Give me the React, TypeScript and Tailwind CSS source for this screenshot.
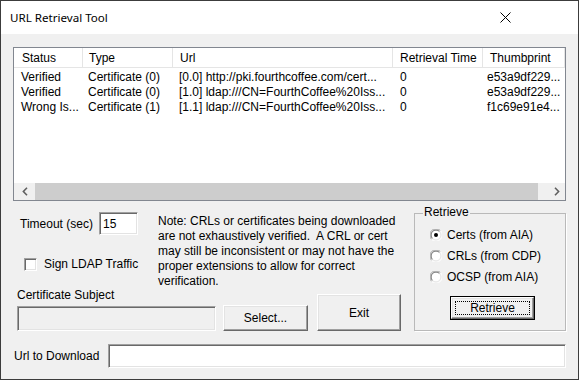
import React from "react";

const rows = [
  ["Verified", "Certificate (0)", "[0.0] http://pki.fourthcoffee.com/cert...", "0", "e53a9df229..."],
  ["Verified", "Certificate (0)", "[1.0] ldap:///CN=FourthCoffee%20Iss...", "0", "e53a9df229..."],
  ["Wrong Is...", "Certificate (1)", "[1.1] ldap:///CN=FourthCoffee%20Iss...", "0", "f1c69e91e4..."],
];

function Radio({ checked }: { checked?: boolean }) {
  return (
    <svg width="12" height="12" viewBox="0 0 12 12" className="shrink-0">
      <circle cx="6" cy="6" r="5.5" fill="#ffffff" />
      <path d="M1.6 10.4 A5.5 5.5 0 0 1 10.4 1.6" fill="none" stroke="#a0a0a0" strokeWidth="1" />
      <path d="M10.4 1.6 A5.5 5.5 0 0 1 1.6 10.4" fill="none" stroke="#ffffff" strokeWidth="1" />
      <path d="M2.5 9.5 A4.5 4.5 0 0 1 9.5 2.5" fill="none" stroke="#696969" strokeWidth="1" />
      <path d="M9.5 2.5 A4.5 4.5 0 0 1 2.5 9.5" fill="none" stroke="#e3e3e3" strokeWidth="1" />
      {checked && <circle cx="6" cy="6" r="2" fill="#000000" />}
    </svg>
  );
}

const btn =
  "flex items-center justify-center bg-[#f0f0f0] border border-t-white border-l-white border-b-[#696969] border-r-[#696969] shadow-[inset_-1px_-1px_0_#a0a0a0,inset_1px_1px_0_#e3e3e3]";
const sunken =
  "border border-t-[#a0a0a0] border-l-[#a0a0a0] border-b-white border-r-white shadow-[inset_1px_1px_0_#696969,inset_-1px_-1px_0_#e3e3e3]";

export default function App() {
  return (
    <div className="w-[579px] h-[380px] border border-[#3c3c3c] bg-[#f0f0f0] flex flex-col overflow-hidden font-['Liberation_Sans',Arial,sans-serif] text-[12px] text-black">
      {/* Title bar */}
      <div className="h-[33px] bg-white flex items-center shrink-0">
        <span className="pl-[9px] text-[11.6px] font-['Noto_Sans',sans-serif]">URL Retrieval Tool</span>
        <svg width="11" height="11" viewBox="0 0 11 11" className="ml-auto mr-[67px]">
          <path d="M0.5 0.5 L10.5 10.5 M10.5 0.5 L0.5 10.5" stroke="#000" strokeWidth="1" />
        </svg>
      </div>

      {/* List view */}
      <div className="mx-[12px] mt-[13px] h-[154px] border border-[#828790] bg-white flex flex-col shrink-0">
        <div className="h-[20px] flex items-center border-b border-[#e5e5e5]">
          <div className="w-[69px] h-full flex items-center pl-[8px] border-r border-[#e5e5e5]">Status</div>
          <div className="w-[90px] h-full flex items-center pl-[6px] border-r border-[#e5e5e5]">Type</div>
          <div className="w-[220px] h-full flex items-center pl-[7px] border-r border-[#e5e5e5]">Url</div>
          <div className="w-[90px] h-full flex items-center pl-[7px] border-r border-[#e5e5e5] whitespace-nowrap">Retrieval Time</div>
          <div className="w-[82px] h-full flex items-center pl-[7px] border-r border-[#e5e5e5]">Thumbprint</div>
        </div>
        <div className="pt-[2px] flex flex-col">
          {rows.map((r, i) => (
            <div key={i} className="h-[15px] flex items-center leading-[15px] whitespace-nowrap">
              <div className="w-[69px] pl-[7px]">{r[0]}</div>
              <div className="w-[90px] pl-[5px]">{r[1]}</div>
              <div className="w-[220px] pl-[6px] overflow-hidden">{r[2]}</div>
              <div className="w-[90px] pl-[7px]">{r[3]}</div>
              <div className="w-[82px] pl-[4px]">{r[4]}</div>
            </div>
          ))}
        </div>
        <div className="mt-auto h-[17px] flex bg-[#f0f0f0]">
          <div className="w-[21px] flex items-center justify-center">
            <svg width="6" height="9" viewBox="0 0 6 9">
              <path d="M5 0.8 L1.4 4.5 L5 8.2" fill="none" stroke="#606060" strokeWidth="1.6" />
            </svg>
          </div>
          <div className="w-[503px] bg-[#cdcdcd]" />
          <div className="flex-1" />
          <div className="w-[17px] flex items-center justify-center">
            <svg width="6" height="9" viewBox="0 0 6 9">
              <path d="M1 0.8 L4.6 4.5 L1 8.2" fill="none" stroke="#606060" strokeWidth="1.6" />
            </svg>
          </div>
        </div>
      </div>

      {/* Lower section */}
      <div className="mx-[12px] flex shrink-0">
        <div className="w-[388px] flex flex-col">
          <div className="h-[88px] flex">
            <div className="w-[145px] pt-[11px] flex flex-col">
              <div className="flex items-center">
                <span className="w-[86px] pl-[7px] whitespace-nowrap">Timeout (sec)</span>
                <div className={`w-[39px] h-[23px] bg-white pl-[3px] flex items-center ${sunken}`}>15</div>
              </div>
              <div className="mt-[20px] pl-[11px] flex items-center gap-[7px]">
                <div className={`w-[13px] h-[13px] bg-white ${sunken}`} />
                <span className="whitespace-nowrap">Sign LDAP Traffic</span>
              </div>
            </div>
            <div className="pt-[13px] leading-[15px] whitespace-pre">
              {"Note: CRLs or certificates being downloaded\nare not exhaustively verified.  A CRL or cert\nmay still be inconsistent or may not have the\nproper extensions to allow for correct\nverification."}
            </div>
          </div>
          <div className="flex items-end">
            <div className="pl-[4px] flex flex-col">
              <span className="leading-[13px]">Certificate Subject</span>
              <div className={`mt-[4px] w-[199px] h-[25px] bg-[#f0f0f0] ${sunken}`} />
            </div>
            <div className={`ml-[7px] w-[85px] h-[26px] ${btn}`}>Select...</div>
            <div className={`ml-[9px] w-[84px] h-[37px] ${btn}`}>Exit</div>
          </div>
        </div>

        <div className="ml-[13px] mt-[12px] w-[152px] h-[118px] relative border border-[#b9b9b9] shadow-[1px_1px_0_#ffffff]">
          <span className="absolute -top-[8px] left-[8px] px-[1px] bg-[#f0f0f0] leading-[13px]">Retrieve</span>
          <div className="pt-[10px] pl-[15px] flex flex-col">
            {[
              ["Certs (from AIA)", true],
              ["CRLs (from CDP)", false],
              ["OCSP (from AIA)", false],
            ].map(([label, c], i) => (
              <div key={i} className="h-[21px] flex items-center gap-[5px]">
                <Radio checked={c as boolean} />
                <span>{label as string}</span>
              </div>
            ))}
          </div>
          <div className="ml-[35px] mt-[9px] w-[85px] h-[24px] border border-black">
            <div className={`w-full h-full p-[3px] ${btn}`}>
              <div className="w-full h-full border border-dotted border-black flex items-center justify-center">Retrieve</div>
            </div>
          </div>
        </div>
      </div>

      {/* Url row */}
      <div className="mx-[12px] mt-[13px] flex items-center shrink-0">
        <span className="w-[95px] pl-[1px] whitespace-nowrap">Url to Download</span>
        <div className={`flex-1 h-[24px] bg-white ${sunken}`} />
      </div>
    </div>
  );
}
